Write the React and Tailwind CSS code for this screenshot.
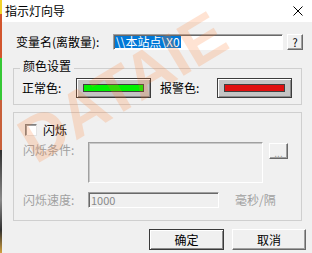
import React from 'react'

const sunken =
  'border border-t-[#a0a0a0] border-l-[#a0a0a0] border-b-white border-r-white shadow-[inset_1px_1px_0_#696969]'
const raised =
  'border border-t-white border-l-white border-b-[#696969] border-r-[#696969] shadow-[inset_-1px_-1px_0_#a0a0a0]'

const ColorButton = ({ color }) => (
  <div className="w-[75px] h-[20px] border border-[#3c3c3c] bg-[#c4c4c4] shadow-[inset_1px_1px_0_#ffffff,inset_-1px_-1px_0_#8a8a8a] flex items-center justify-center">
    <div className={`w-[61px] h-[8px] border border-[#404040] ${color}`} />
  </div>
)

const App = () => {
  return (
    <div className="w-[312px] h-[253px] relative overflow-hidden flex bg-[#f0f0f0] text-[12px] leading-[16px] text-black font-['Noto_Sans_CJK_SC','Liberation_Sans',sans-serif]">
      {/* desktop behind the dialog */}
      <div className="w-[2px] h-full bg-[linear-gradient(to_bottom,#f2d22a_0px,#f2d22a_14px,#d2552d_14px,#d2552d_58px,#36c836_58px,#36c836_100px,#c8603a_100px,#c8603a_150px,#303030_150px,#8a8a8a_200px,#303030_230px,#d2a040_253px)]" />

      <div className="flex-1 flex flex-col">
        {/* Title bar */}
        <div className="h-[22px] bg-white flex items-center justify-between pl-[3px] pr-[9px] shrink-0">
          <span className="text-[12px]">指示灯向导</span>
          <svg width="10" height="10" viewBox="0 0 10 10">
            <path d="M0.5 0.5 L9.5 9.5 M9.5 0.5 L0.5 9.5" stroke="#000" strokeWidth="1" />
          </svg>
        </div>

        <div className="flex flex-col pl-[11px]">
          {/* variable name */}
          <div className="flex items-center h-[16px] mt-[12px]">
            <span className="ml-[3px] w-[97px] whitespace-nowrap">变量名(离散量):</span>
            <div className={`w-[170px] h-[16px] bg-white ${sunken} flex items-center pl-[1px]`}>
              <span className="bg-[#0078d7] text-white leading-[12px] px-[1px]">{'\\\\本站点\\X0'}</span>
            </div>
            <div className={`ml-[4px] w-[16px] h-[16px] bg-[#f0f0f0] ${raised} flex items-center justify-center text-[11px]`}>
              ?
            </div>
          </div>

          {/* colour settings */}
          <div className="relative mt-[18px] w-[289px] h-[37px] border border-[#cfcfcf]">
            <span className="absolute left-[6px] top-[-11px] px-[3px] bg-[#f0f0f0]">颜色设置</span>
            <div className="flex items-center pt-[9px] pl-[8px]">
              <span className="w-[54px]">正常色:</span>
              <ColorButton color="bg-[#00f000]" />
              <span className="ml-[9px] w-[57px]">报警色:</span>
              <ColorButton color="bg-[#e01010]" />
            </div>
          </div>

          {/* flashing */}
          <div className="mt-[7px] w-[289px] h-[109px] border border-[#cfcfcf] flex flex-col">
            <div className="flex items-center h-[12px] mt-[11px] pl-[11px]">
              <div className="w-[12px] h-[12px] bg-white border border-t-[#808080] border-l-[#808080] border-b-[#e3e3e3] border-r-[#e3e3e3] shadow-[inset_1px_1px_0_#a0a0a0]" />
              <span className="ml-[6px]">闪烁</span>
            </div>
            <div className="flex items-start mt-[6px] pl-[9px] text-[#a0a0a0]">
              <span className="w-[65px]">闪烁条件:</span>
              <div className={`w-[175px] h-[41px] bg-[#f0f0f0] ${sunken} shadow-[inset_1px_1px_0_#c8c8c8]`} />
              <div className={`ml-[6px] mt-[1px] w-[19px] h-[16px] ${raised} flex items-end justify-center leading-[10px] text-[10px]`}>
                ...
              </div>
            </div>
            <div className="flex items-center mt-[9px] pl-[9px] text-[#a0a0a0]">
              <span className="w-[65px]">闪烁速度:</span>
              <div className={`w-[131px] h-[16px] bg-[#f0f0f0] ${sunken} flex items-center pl-[2px] text-[11px] text-[#8a8a8a]`}>
                1000
              </div>
              <span className="ml-[16px]">毫秒/隔</span>
            </div>
          </div>

          {/* buttons */}
          <div className="flex mt-[8px] ml-[136px]">
            <div className="w-[75px] h-[21px] border border-[#3a3a3a] bg-[#f0f0f0] shadow-[inset_1px_1px_0_#ffffff,inset_-1px_-1px_0_#8a8a8a] flex items-center justify-center">
              确定
            </div>
            <div className={`ml-[8px] w-[74px] h-[21px] bg-[#f0f0f0] ${raised} flex items-center justify-center`}>
              取消
            </div>
          </div>
        </div>
      </div>

      {/* watermark */}
      <span className="absolute left-[8px] top-[55px] pointer-events-none select-none leading-none text-[64px] font-bold font-['Liberation_Sans',sans-serif] text-[#ff7a2a] opacity-20 rotate-[-31deg]">
        DATAIE
      </span>
    </div>
  )
}

export default App
